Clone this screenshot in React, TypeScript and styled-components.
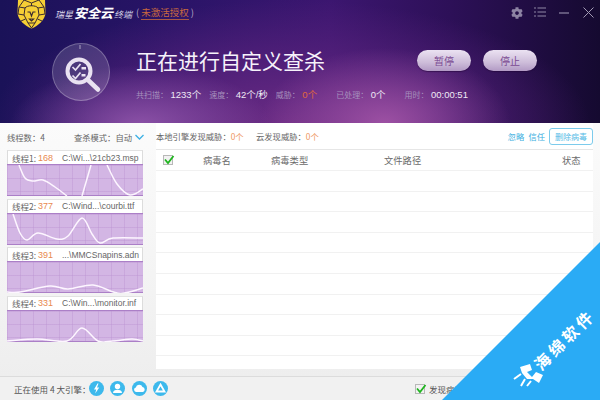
import React from 'react';
import styled, { createGlobalStyle } from 'styled-components';
import { FaCog } from 'react-icons/fa';

const CJK = `"Noto Sans CJK SC", "Liberation Sans", sans-serif`;
const LATIN = `"Liberation Sans", "Noto Sans CJK SC", sans-serif`;

const Global = createGlobalStyle`
  html, body { margin: 0; padding: 0; background: #fff; }
  * { box-sizing: border-box; }
`;

const Window = styled.div`
  position: relative;
  width: 600px;
  height: 400px;
  overflow: hidden;
  display: flex;
  flex-direction: column;
  font-family: ${CJK};
  background: #f2f2f2;
`;

const Header = styled.header`
  height: 123px;
  flex: none;
  display: flex;
  flex-direction: column;
  color: #fff;
  background:
    radial-gradient(ellipse 125px 75px at 385px 123px, rgba(168, 88, 170, 0.85), rgba(168, 88, 170, 0) 100%),
    radial-gradient(ellipse 130px 60px at 140px 125px, rgba(150, 90, 175, 0.85), rgba(150, 90, 175, 0) 100%),
    radial-gradient(ellipse 300px 125px at 290px 125px, #6b2c84 0%, rgba(90, 35, 125, 0.75) 50%, rgba(60, 20, 100, 0) 100%),
    linear-gradient(90deg, #1a1258 0%, #2a1468 30%, #3c1670 55%, #2d1058 75%, #150a30 100%);
`;

const TitleBar = styled.div`
  height: 29px;
  display: flex;
  align-items: flex-start;
  padding-left: 17px;
`;

const Brand = styled.div`
  margin-left: 9px;
  margin-top: 3px;
  height: 20px;
  display: flex;
  align-items: baseline;
  color: #d8d4e8;
  font-size: 9px;
  font-style: italic;
  white-space: nowrap;
`;

const BrandBig = styled.span`
  font-size: 13px;
  line-height: 20px;
  font-weight: 700;
  color: #fff;
  margin: 0 1px;
`;

const License = styled.div`
  margin-left: 4px;
  margin-top: 4px;
  font-size: 9.5px;
  line-height: 16px;
  color: #b8a8c8;
  white-space: nowrap;
`;

const LicenseLink = styled.span`
  color: #c8693f;
  border-bottom: 1px solid #a85a48;
  margin: 0 2px;
`;

const Controls = styled.div`
  margin-left: auto;
  display: flex;
  align-items: center;
  height: 24px;
  padding-right: 6px;
  color: #9088a6;
`;

const GearSlot = styled.span`
  display: flex;
  margin-right: 11px;
  margin-top: 1px;
  font-size: 12px;
  color: #8d83a3;
`;

const CtrlIcon = styled.svg<{ $gap: number }>`
  display: block;
  margin-right: ${p => p.$gap}px;
`;

const ScanRow = styled.div`
  flex: 1;
  display: flex;
  padding: 6px 0 0 52px;
`;

const Dial = styled.div`
  width: 58px;
  height: 58px;
  flex: none;
  margin-top: 8px;
  border-radius: 50%;
  background: rgba(255, 255, 255, 0.15);
  border: 1px solid rgba(255, 255, 255, 0.25);
`;

const ScanInfo = styled.div`
  margin-left: 26px;
  width: 401px;
  display: flex;
  flex-direction: column;
`;

const HeadRow = styled.div`
  height: 31px;
  margin-top: 10px;
  display: flex;
  align-items: center;
`;

const ScanTitle = styled.h1`
  margin: 0;
  font-size: 21px;
  font-weight: 400;
  line-height: 31px;
  color: #f6f2fa;
  white-space: nowrap;
`;

const Actions = styled.div`
  margin-left: auto;
  display: flex;
  gap: 12px;
`;

const Pill = styled.button`
  width: 54px;
  height: 21px;
  padding: 0;
  border: none;
  border-radius: 11px;
  background: linear-gradient(180deg, #ebe2f2 0%, #cdbcd9 60%, #b29ac4 100%);
  box-shadow: 0 1px 1px rgba(30, 0, 50, 0.5);
  color: #7b4a92;
  font-family: ${CJK};
  font-size: 10px;
  line-height: 21px;
`;

const Stats = styled.div`
  margin-top: 10px;
  display: flex;
  align-items: center;
  height: 16px;
  white-space: nowrap;
`;

const Stat = styled.div<{ $after: number }>`
  display: flex;
  align-items: baseline;
  margin-right: ${p => p.$after}px;
`;

const StatLabel = styled.span`
  font-size: 8px;
  color: #a590bd;
  margin-right: 2.500px;
`;

const StatValue = styled.span<{ $hot?: boolean }>`
  font-family: ${LATIN};
  font-size: 9.5px;
  color: ${p => (p.$hot ? '#e0683c' : '#efe9f5')};
`;

const Body = styled.main`
  flex: 1;
  min-height: 0;
  display: flex;
  background: linear-gradient(180deg, #fbfbfb 0%, #f4f4f4 60%, #eeeeee 100%);
`;

const Side = styled.aside`
  width: 156px;
  flex: none;
  display: flex;
  flex-direction: column;
  padding: 0 13px 0 7px;
`;

const SideTools = styled.div`
  height: 27px;
  display: flex;
  align-items: center;
  justify-content: space-between;
  font-size: 8.300px;
  color: #666;
  white-space: nowrap;
`;

const Mode = styled.span`
  display: flex;
  align-items: center;
  gap: 3px;
  margin-right: -1px;
`;

const CardList = styled.div`
  display: flex;
  flex-direction: column;
  gap: 2.600px;
`;

const Card = styled.section`
  height: 46px;
  display: flex;
  flex-direction: column;
  border: 1px solid #dcdcdc;
  border-top-color: #e2e2e2;
  border-bottom: none;
  background: #fff;
`;

const CardHead = styled.div`
  height: 13px;
  flex: none;
  display: flex;
  align-items: center;
  padding-left: 4px;
  font-size: 8.500px;
  color: #666;
  white-space: nowrap;
`;

const ThreadName = styled.span`
  width: 26px;
  flex: none;
`;

const ThreadCount = styled.span`
  width: 24px;
  flex: none;
  color: #e88a50;
  font-family: ${LATIN};
  font-size: 9px;
`;

const ThreadPath = styled.span`
  font-family: ${LATIN};
  font-size: 8.500px;
  color: #666;
`;

const Graph = styled.div`
  flex: 1;
  min-height: 0;
  border-top: 1px solid #ab7fc7;
  border-bottom: 1px solid #ab7fc7;
  background-color: #d3b6e4;
  background-image:
    linear-gradient(90deg, rgba(190, 150, 212, 0.45) 1px, transparent 1px),
    linear-gradient(180deg, rgba(190, 150, 212, 0.45) 1px, transparent 1px);
  background-size: 13px 13px;
  margin: 0 -1px;
`;

const GraphSvg = styled.svg`
  display: block;
  width: 136px;
  height: 31px;
`;

const Content = styled.div`
  flex: 1;
  display: flex;
  flex-direction: column;
  margin-right: 7px;
  margin-bottom: 7px;
  background: #fff;
`;

const Tools = styled.div`
  height: 27px;
  flex: none;
  display: flex;
  align-items: center;
  font-size: 8.300px;
  color: #666;
  white-space: nowrap;
  border-bottom: 1px solid #e6e6e6;
`;

const ToolStat = styled.span<{ $w: number }>`
  width: ${p => p.$w}px;
`;

const Hot = styled.span`
  color: #ee9560;
`;

const ToolLink = styled.span`
  color: #39aee0;
  margin-right: 4px;
`;

const ToolLinks = styled.div`
  margin-left: auto;
  display: flex;
  align-items: center;
`;

const DeleteBtn = styled.button`
  width: 44px;
  height: 17px;
  padding: 0;
  border: 1px solid #7ccbec;
  border-radius: 3px;
  background: #fff;
  color: #55bbe6;
  font-family: ${CJK};
  font-size: 8px;
  line-height: 15px;
`;

const ColRow = styled.div`
  height: 21px;
  flex: none;
  display: grid;
  grid-template-columns: 47px 68px 113px 178px 1fr;
  align-items: center;
  font-size: 9.300px;
  color: #6b6b6b;
  border-bottom: 1px solid #f1f1f1;
`;

const CheckSlot = styled.span`
  display: flex;
  padding-left: 7px;
`;

const Check = styled.span`
  width: 10px;
  height: 10px;
  display: block;
  flex: none;
  background: #f2f2f2;
  border: 1px solid #b8b8b8;
  position: relative;
`;

const CheckMark = styled.svg`
  position: absolute;
  left: -1px;
  top: -2px;
`;

const Row = styled.div`
  height: 20.600px;
  flex: none;
  border-bottom: 1px solid #f1f1f1;
`;

const Footer = styled.footer`
  height: 24px;
  flex: none;
  display: flex;
  align-items: center;
  padding: 0 0 0 14px;
  background: #f1f1f1;
  border-top: 1px solid #dcdcdc;
  font-size: 8.500px;
  color: #555;
  white-space: nowrap;
`;

const FooterLabel = styled.span`
  width: 75px;
  flex: none;
`;

const Engines = styled.div`
  display: flex;
  gap: 6.300px;
`;

const Engine = styled.svg`
  display: block;
  width: 15px;
  height: 15px;
`;

const AutoOption = styled.label`
  margin-left: 247px;
  display: flex;
  align-items: center;
  gap: 4px;
`;

const Ribbon = styled.div`
  position: absolute;
  right: 0;
  bottom: 0;
  width: 158px;
  height: 158px;
  background: #2aabf5;
  clip-path: polygon(100% 0, 100% 100%, 0 100%);
`;

const RibbonLogo = styled.svg`
  position: absolute;
  left: 70px;
  top: 122px;
`;

const RibbonText = styled.div`
  position: absolute;
  left: 122px;
  top: 97px;
  transform: translate(-50%, -50%) rotate(-45deg);
  color: #fff;
  font-size: 16px;
  line-height: 20px;
  font-weight: 700;
  letter-spacing: 3.500px;
  white-space: nowrap;
`;

const curve = (pts: number[][]) => {
  let d = `M${pts[0][0]} ${pts[0][1]}`;
  for (let i = 0; i < pts.length - 1; i++) {
    const p0 = pts[Math.max(i - 1, 0)];
    const p1 = pts[i];
    const p2 = pts[i + 1];
    const p3 = pts[Math.min(i + 2, pts.length - 1)];
    const c1x = p1[0] + (p2[0] - p0[0]) / 6;
    const c1y = p1[1] + (p2[1] - p0[1]) / 6;
    const c2x = p2[0] - (p3[0] - p1[0]) / 6;
    const c2y = p2[1] - (p3[1] - p1[1]) / 6;
    d += ` C${c1x.toFixed(1)} ${c1y.toFixed(1)} ${c2x.toFixed(1)} ${c2y.toFixed(1)} ${p2[0]} ${p2[1]}`;
  }
  return d;
};

const threads = [
  {
    name: '线程1:', count: 168, path: 'C:\\Wi...\\21cb23.msp',
    lines: [
      [[12, 0], [18, 13], [26, 16], [36, 15], [48, 22], [60, 31]],
      [[75, 31], [84, 0]],
      [[100, 0], [110, 19], [123, 30], [136, 24]],
    ],
  },
  {
    name: '线程2:', count: 377, path: 'C:\\Wind...\\courbi.ttf',
    lines: [[[6, 0], [13, 19], [20, 26], [31, 19], [50, 25], [61, 22], [75, 4], [85, 20], [93, 29], [106, 24], [136, 24]]],
  },
  {
    name: '线程3:', count: 391, path: '...\\MMCSnapins.adn',
    lines: [[[0, 30], [13, 30], [43, 24], [61, 27], [86, 23], [108, 30.5], [120, 30.5], [136, 26]]],
  },
  {
    name: '线程4:', count: 331, path: 'C:\\Win...\\monitor.inf',
    lines: [[[0, 30], [30, 28], [60, 30], [75, 17], [91, 30], [106, 30], [125, 28], [136, 30]]],
  },
];

const Lion = () => (
  <svg width="29" height="29" viewBox="0 0 29 29">
    <path d="M1 0H28L28.500 13C28 20 21 26 14.500 28.500C8 26 1 20 .5 13Z" fill="#f6cf35" />
    <g fill="none" stroke="#3a2a30" strokeWidth="1">
      <path d="M7 0L2 7L1 14M22 0L27 7L28 14M7 0L14.500 3L22 0" />
      <path d="M8 8C10 5 19 5 21 8L22 15L18 23H11L7 15Z" />
      <path d="M2 7L8 8M27 7L21 8M1 14L7 15M28 14L22 15M4 21L8.500 19M25 21L20.500 19M11 23L14.500 28M18 23L14.500 28M14.500 3V6" />
      <path d="M10.500 12H13L14.500 16L16 12H18.500M12.500 19H16.500L14.500 21Z" strokeWidth="1.200" />
    </g>
  </svg>
);

const ScanGlyph = () => (
  <svg width="56" height="56" viewBox="0 0 56 56">
    <path d="M27 1v4" stroke="rgba(255,255,255,.55)" strokeWidth="1" />
    <circle cx="26" cy="27" r="11.500" fill="none" stroke="#e9e2f1" strokeWidth="4" />
    <path d="M35 36L45 45.500" stroke="#e9e2f1" strokeWidth="4.500" strokeLinecap="round" />
    <g fill="none" stroke="#e9e2f1" strokeWidth="1.700">
      <path d="M19.500 23L22.500 26L27.500 20M19.500 31.500L22.500 34.500L27.500 28.500" />
    </g>
    <path d="M28.500 23h4.500v2.500h-4.500zM28.500 30h4v2.500h-4z" fill="#e9e2f1" />
  </svg>
);

const CheckBox = () => (
  <Check>
    <CheckMark width="12" height="11" viewBox="0 0 12 11">
      <path d="M2 5.500L5 9L10.500 2" fill="none" stroke="#1fb51f" strokeWidth="1.800" />
    </CheckMark>
  </Check>
);

export default function App() {
  return (
    <Window>
      <Global />
      <Header>
        <TitleBar>
          <Lion />
          <Brand>瑞星<BrandBig>安全云</BrandBig>终端</Brand>
          <License>(<LicenseLink>未激活授权</LicenseLink>)</License>
          <Controls>
            <GearSlot><FaCog /></GearSlot>
            <CtrlIcon $gap={13} width="12" height="10" viewBox="0 0 12 10">
              <path d="M0 1h2M0 5h2M0 9h2M3.500 1H12M3.500 5H12M3.500 9H12" stroke="#9088a6" strokeWidth="1" />
            </CtrlIcon>
            <CtrlIcon $gap={14} width="10" height="10" viewBox="0 0 10 10">
              <path d="M0 6h10" stroke="#9088a6" strokeWidth="1.200" />
            </CtrlIcon>
            <CtrlIcon $gap={0} width="11" height="11" viewBox="0 0 11 11">
              <path d="M.5.5L10.500 10.500M10.500.5L.5 10.500" stroke="#a29ab4" strokeWidth="1" />
            </CtrlIcon>
          </Controls>
        </TitleBar>
        <ScanRow>
          <Dial><ScanGlyph /></Dial>
          <ScanInfo>
            <HeadRow>
              <ScanTitle>正在进行自定义查杀</ScanTitle>
              <Actions>
                <Pill>暂停</Pill>
                <Pill>停止</Pill>
              </Actions>
            </HeadRow>
            <Stats>
              <Stat $after={8}><StatLabel>共扫描：</StatLabel><StatValue>1233个</StatValue></Stat>
              <Stat $after={8}><StatLabel>速度：</StatLabel><StatValue>42个/秒</StatValue></Stat>
              <Stat $after={19}><StatLabel>威胁：</StatLabel><StatValue $hot>0个</StatValue></Stat>
              <Stat $after={19}><StatLabel>已处理：</StatLabel><StatValue>0个</StatValue></Stat>
              <Stat $after={0}><StatLabel>用时：</StatLabel><StatValue>00:00:51</StatValue></Stat>
            </Stats>
          </ScanInfo>
        </ScanRow>
      </Header>
      <Body>
        <Side>
          <SideTools>
            <span>线程数：4</span>
            <Mode>
              查杀模式：自动
              <svg width="9" height="6" viewBox="0 0 9 6">
                <path d="M.5 1L4.500 5L8.500 1" fill="none" stroke="#3cb0e4" strokeWidth="1.300" />
              </svg>
            </Mode>
          </SideTools>
          <CardList>
            {threads.map(t => (
              <Card key={t.name}>
                <CardHead>
                  <ThreadName>{t.name}</ThreadName>
                  <ThreadCount>{t.count}</ThreadCount>
                  <ThreadPath>{t.path}</ThreadPath>
                </CardHead>
                <Graph>
                  <GraphSvg viewBox="0 0 136 31">
                    {t.lines.map((l, i) => (
                      <path key={i} d={curve(l)} fill="none" stroke="#fdf6ff" strokeWidth="1.500" />
                    ))}
                  </GraphSvg>
                </Graph>
              </Card>
            ))}
          </CardList>
        </Side>
        <Content>
          <Tools>
            <ToolStat $w={100}>本地引擎发现威胁：<Hot>0个</Hot></ToolStat>
            <ToolStat $w={80}>云发现威胁：<Hot>0个</Hot></ToolStat>
            <ToolLinks>
              <ToolLink>忽略</ToolLink>
              <ToolLink>信任</ToolLink>
              <DeleteBtn>删除病毒</DeleteBtn>
            </ToolLinks>
          </Tools>
          <ColRow>
            <CheckSlot><CheckBox /></CheckSlot>
            <span>病毒名</span>
            <span>病毒类型</span>
            <span>文件路径</span>
            <span>状态</span>
          </ColRow>
          {Array.from({ length: 9 }, (_, i) => <Row key={i} />)}
        </Content>
      </Body>
      <Footer>
        <FooterLabel>正在使用 4 大引擎：</FooterLabel>
        <Engines>
          <Engine viewBox="0 0 15 15">
            <circle cx="7.500" cy="7.500" r="7.500" fill="#3db9ec" />
            <path d="M8.500 2.500L5 8.500H7.200L6.200 12.500L10.200 6.500H8L9.500 2.500Z" fill="#fff" />
          </Engine>
          <Engine viewBox="0 0 15 15">
            <circle cx="7.500" cy="7.500" r="7.500" fill="#3db9ec" />
            <circle cx="7.500" cy="5.500" r="2.700" fill="#fff" />
            <path d="M3 12C3 9.500 5 8.800 7.500 8.800S12 9.500 12 12Z" fill="#fff" />
          </Engine>
          <Engine viewBox="0 0 15 15">
            <circle cx="7.500" cy="7.500" r="7.500" fill="#3db9ec" />
            <path d="M4 11A2.300 2.300 0 0 1 3.800 6.500A3.500 3.500 0 0 1 10.500 6A2.600 2.600 0 0 1 11 11Z" fill="#fff" />
          </Engine>
          <Engine viewBox="0 0 15 15">
            <circle cx="7.500" cy="7.500" r="7.500" fill="#3db9ec" />
            <path d="M7.500 3.500L11.500 10.500H3.500Z" fill="none" stroke="#fff" strokeWidth="1.800" />
          </Engine>
        </Engines>
        <AutoOption>
          <CheckBox />
          发现病毒后自动处理
        </AutoOption>
      </Footer>
      <Ribbon>
        <RibbonLogo width="32" height="24" viewBox="0 0 32 24">
          <path d="M8 3L18 0L20 6L15 8L20 13L24 8L31 11L27 19L21 15L15 15L10 9Z" fill="#fff" />
          <path d="M2 15L9 10M9 22L13 15M15 22L19 17" stroke="#fff" strokeWidth="2" />
        </RibbonLogo>
        <RibbonText>海绵软件</RibbonText>
      </Ribbon>
    </Window>
  );
}
